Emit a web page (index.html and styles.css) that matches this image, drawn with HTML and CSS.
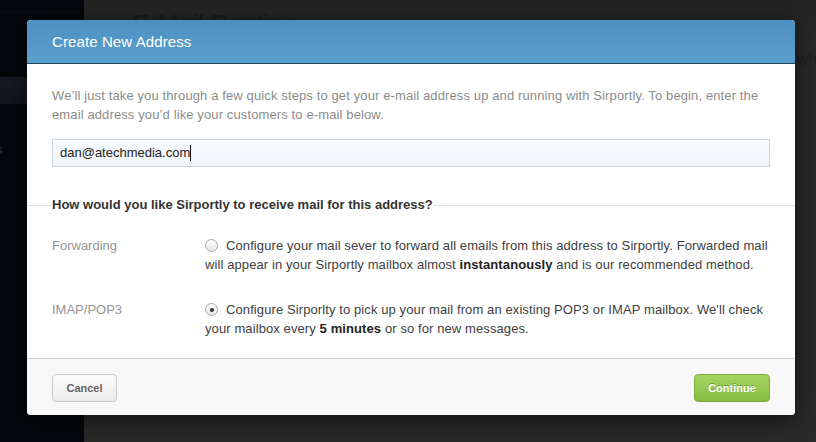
FILE: index.html
```html
<!DOCTYPE html>
<html>
<head>
<meta charset="utf-8">
<link rel="stylesheet" href="styles.css">
</head>
<body>
<div class="app">
  <aside class="sidebar">
    <div class="side-top"></div>
    <div class="side-active"></div>
    <div class="side-item">s</div>
  </aside>
  <main class="main">
    <div class="main-head">
      <h1 class="page-title">E-Mail Routing</h1>
    </div>
    <div class="main-sub">wh</div>
  </main>
</div>

<div class="modal">
  <div class="modal-header">Create New Address</div>
  <div class="modal-body">
    <p class="intro">We’ll just take you through a few quick steps to get your e-mail address up and running with Sirportly. To begin, enter the email address you’d like your customers to e-mail below.</p>
    <div class="field"><span class="field-text">dan@atechmedia.com</span><span class="caret"></span></div>
  </div>
  <div class="section-title"><span>How would you like Sirportly to receive mail for this address?</span></div>
  <div class="options">
    <div class="option">
      <div class="opt-label">Forwarding</div>
      <div class="opt-desc"><span class="radio"></span>Configure your mail sever to forward all emails from this address to Sirportly. Forwarded mail will appear in your Sirportly mailbox almost <b>instantanously</b> and is our recommended method.</div>
    </div>
    <div class="option">
      <div class="opt-label">IMAP/POP3</div>
      <div class="opt-desc"><span class="radio checked"></span>Configure Sirporlty to pick up your mail from an existing POP3 or IMAP mailbox. We'll check your mailbox every <b>5 minutes</b> or so for new messages.</div>
    </div>
  </div>
  <div class="modal-footer">
    <button class="btn btn-cancel">Cancel</button>
    <button class="btn btn-continue">Continue</button>
  </div>
</div>
</body>
</html>
```

FILE: styles.css
```css
html, body {
  margin: 0;
  padding: 0;
  width: 816px;
  height: 442px;
  overflow: hidden;
  background: #2a2a2a;
  font-family: "Liberation Sans", Arial, Helvetica, sans-serif;
}

.app {
  display: flex;
  height: 442px;
}

.sidebar {
  width: 84px;
  background: #04070b;
  display: flex;
  flex-direction: column;
}

.side-top {
  height: 12px;
  border-bottom: 1px solid #0b0f14;
}

.side-active {
  margin-top: 64px;
  height: 27px;
  background: linear-gradient(#151c25, #10161d);
}

.side-item {
  margin-top: 38px;
  margin-left: -4px;
  color: #3a3d40;
  font-size: 13px;
}

.main {
  flex: 1;
  background: #2a2a2a;
  display: flex;
  flex-direction: column;
}

.main-head {
  height: 48px;
  background: linear-gradient(#232323, #2b2b2b);
}

.page-title {
  margin: 10px 0 0 49px;
  font-size: 25px;
  font-weight: normal;
  color: #1a1a1a;
}

.main-sub {
  align-self: flex-end;
  font-size: 16px;
  line-height: 20px;
  padding-top: 2px;
  color: #1f1f1f;
  height: 50px;
  width: 19px;
  overflow: hidden;
  border-bottom: 1px solid #262626;
}

.modal {
  position: absolute;
  left: 27px;
  top: 20px;
  width: 768px;
  height: 395px;
  background: #fff;
  border-radius: 4px;
  box-shadow: 0 4px 24px rgba(0, 0, 0, 0.65);
  overflow: hidden;
  display: flex;
  flex-direction: column;
}

.modal-header {
  height: 44px;
  box-sizing: border-box;
  padding: 13px 25px 0;
  background: linear-gradient(#4d90c2, #5aa0cc);
  border-bottom: 1px solid #25415a;
  color: #fff;
  font-size: 15px;
  letter-spacing: 0.1px;
}

.modal-body {
  padding: 22px 25px 0;
}

.intro {
  margin: 0;
  color: #8c8c8c;
  font-size: 13px;
  line-height: 19px;
  letter-spacing: 0.12px;
}

.field {
  margin-top: 15px;
  height: 28px;
  box-sizing: border-box;
  border: 1px solid #ccd8e0;
  background: linear-gradient(#f7fafd, #eff5f9);
  padding: 5px 7px 0;
  display: flex;
  align-items: flex-start;
  font-size: 13px;
  color: #222;
}

.caret {
  width: 1px;
  height: 16px;
  background: #111;
}

.section-title {
  margin-top: 38px;
  height: 1px;
  background: #dfe3e6;
  position: relative;
}

.section-title span {
  position: absolute;
  left: 25px;
  top: -8px;
  background: #fff;
  font-size: 13px;
  font-weight: bold;
  color: #333;
  line-height: 16px;
}

.options {
  padding: 30px 25px 0;
  display: flex;
  flex-direction: column;
  gap: 26px;
}

.option {
  display: grid;
  grid-template-columns: 153px 1fr;
}

.opt-label {
  color: #959595;
  font-size: 13px;
  line-height: 19px;
}

.opt-desc {
  color: #3e3e3e;
  font-size: 13px;
  line-height: 19px;
  letter-spacing: 0.1px;
}

.opt-desc b {
  color: #222;
}

.radio {
  display: inline-block;
  box-sizing: border-box;
  width: 13px;
  height: 13px;
  border-radius: 50%;
  border: 1px solid #a9a9a9;
  background: linear-gradient(#ffffff, #e6e6e6);
  vertical-align: -2px;
  margin-right: 8px;
  position: relative;
}

.radio.checked::after {
  content: "";
  position: absolute;
  left: 3.5px;
  top: 3.5px;
  width: 4px;
  height: 4px;
  border-radius: 50%;
  background: #333;
}

.modal-footer {
  margin-top: auto;
  height: 57px;
  box-sizing: border-box;
  border-top: 1px solid #d4d4d4;
  background: #f8f8f8;
  padding: 15px 25px 0;
  display: flex;
  justify-content: space-between;
  align-items: flex-start;
}

.btn {
  height: 28px;
  box-sizing: border-box;
  border-radius: 4px;
  font-family: "Liberation Sans", Arial, sans-serif;
  font-size: 11px;
  font-weight: bold;
  padding: 0;
  cursor: pointer;
}

.btn-cancel {
  width: 65px;
  border: 1px solid #c8c8c8;
  background: linear-gradient(#fbfbfb, #ebebeb);
  color: #666;
}

.btn-continue {
  width: 76px;
  border: 1px solid #79ab3b;
  background: linear-gradient(#a6d564, #85bd41);
  color: #fff;
  text-shadow: 0 -1px 0 rgba(60, 100, 20, 0.5);
}
```
